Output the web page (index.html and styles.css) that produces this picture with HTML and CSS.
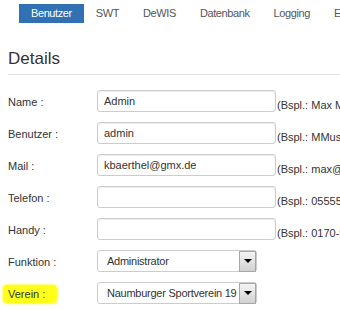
FILE: index.html
```html
<!DOCTYPE html>
<html lang="de">
<head>
    <meta charset="UTF-8">
    <title>Benutzer - Details</title>
    <link rel="stylesheet" href="styles.css">
</head>
<body>
    <ul class="nav-tabs">
        <li class="active">Benutzer</li>
        <li>SWT</li>
        <li>DeWIS</li>
        <li>Datenbank</li>
        <li>Logging</li>
        <li>Einstellungen</li>
    </ul>

    <h2 class="page-title">Details</h2>

    <div class="user-form">
        <label class="form-label">Name :</label>
        <input class="form-input" type="text" value="Admin">
        <span class="form-hint">(Bspl.: Max Mustermann)</span>

        <label class="form-label">Benutzer :</label>
        <input class="form-input" type="text" value="admin">
        <span class="form-hint">(Bspl.: MMustermann)</span>

        <label class="form-label">Mail :</label>
        <input class="form-input" type="text" value="kbaerthel@gmx.de">
        <span class="form-hint">(Bspl.: max@mustermann.de)</span>

        <label class="form-label">Telefon :</label>
        <input class="form-input" type="text" value="">
        <span class="form-hint">(Bspl.: 05555-123456)</span>

        <label class="form-label">Handy :</label>
        <input class="form-input" type="text" value="">
        <span class="form-hint">(Bspl.: 0170-9876543)</span>

        <label class="form-label">Funktion :</label>
        <div class="form-select">
            <span class="select-text">Administrator</span>
            <span class="select-btn"><i></i></span>
        </div>
        <span></span>

        <label class="form-label"><span class="marked">Verein :</span></label>
        <div class="form-select">
            <span class="select-text">Naumburger Sportverein 19</span>
            <span class="select-btn"><i></i></span>
        </div>
        <span></span>
    </div>
</body>
</html>
```

FILE: styles.css
```css
* {
    padding: 0px;
    margin: 0px;
    list-style: none;
    box-sizing: border-box;
}
body {
    width: 340px;
    height: 310px;
    overflow: hidden;
    font-family: "Liberation Sans", Arial, sans-serif;
    font-size: 11px;
    color: #333;
    background-color: #fff;
}
.nav-tabs {
    display: flex;
    padding: 4px 0px 0px 19px;
    white-space: nowrap;
}
.nav-tabs li {
    padding: 0px 12px;
    height: 19px;
    line-height: 19px;
    font-size: 11px;
    letter-spacing: -0.4px;
    color: #555;
    flex-shrink: 0;
}
.nav-tabs .active {
    background-color: #3071b4;
    color: #fff;
}
.page-title {
    margin: 26px 0px 0px 8px;
    padding-bottom: 5px;
    border-bottom: 1px solid #e5e5e5;
    font-size: 17px;
    font-weight: normal;
    line-height: 20px;
    color: #333;
}
.user-form {
    display: grid;
    grid-template-columns: 89px 179px 1fr;
    grid-auto-rows: 22px;
    row-gap: 10px;
    margin: 15px 0px 0px 8px;
}
.form-label {
    align-self: center;
    padding-top: 2px;
    white-space: nowrap;
}
.form-input {
    height: 22px;
    width: 179px;
    padding: 0px 6px;
    border: 1px solid #ccc;
    border-radius: 3px;
    box-shadow: inset 0px 1px 1px rgba(0, 0, 0, 0.08);
    font-family: inherit;
    font-size: 11px;
    color: #333;
}
.form-hint {
    align-self: end;
    padding: 0px 0px 1px 1px;
    white-space: nowrap;
    overflow: hidden;
}
.form-select {
    display: flex;
    align-items: center;
    width: 160px;
    height: 22px;
    padding-left: 9px;
    border: 1px solid #ccc;
    border-radius: 3px;
    background-color: #fff;
}
.select-text {
    flex: 1;
    overflow: hidden;
    white-space: nowrap;
    letter-spacing: -0.25px;
}
.select-btn {
    display: flex;
    align-items: center;
    justify-content: center;
    width: 17px;
    height: 21px;
    border: 1px solid #a6a6a6;
    background: linear-gradient(#f4f4f4, #d2d2d2);
}
.select-btn i {
    width: 0px;
    height: 0px;
    border-left: 4px solid transparent;
    border-right: 4px solid transparent;
    border-top: 4px solid #000;
}
.marked {
    margin-left: -5px;
    padding: 3px 12px 3px 5px;
    background-color: #ffff1a;
    border-radius: 4px;
    box-shadow: 0px 0px 2px 1px #ffff66;
}
```
